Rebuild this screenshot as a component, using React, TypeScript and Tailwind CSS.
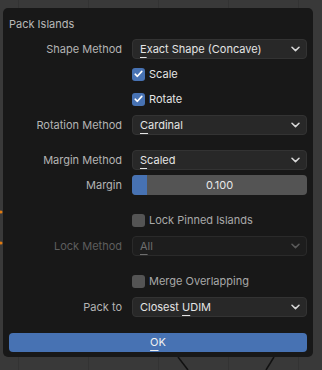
import React from 'react';

const Chevron = ({ color = '#d8d8d8' }: { color?: string }) => (
  <svg width="9" height="6" viewBox="0 0 9 6" className="shrink-0">
    <path d="M1 1.2 L4.5 4.6 L8 1.2" fill="none" stroke={color} strokeWidth="1.5" strokeLinecap="round" strokeLinejoin="round" />
  </svg>
);

const Key = ({ children }: { children: React.ReactNode }) => (
  <span className="underline decoration-1 underline-offset-[4px]">{children}</span>
);

const Label = ({ text, dim }: { text?: string; dim?: boolean }) => (
  <div className={`w-[114px] shrink-0 pr-[1px] text-right ${dim ? 'text-[#5e5e5e]' : 'text-[#b4b4b4]'}`}>
    {text}
  </div>
);

type DropProps = { label: string; before?: string; keyChar: string; after: string; dim?: boolean };

const Dropdown = ({ label, before = '', keyChar, after, dim }: DropProps) => (
  <div className="flex h-[20px] items-center gap-[9px]">
    <Label text={label} dim={dim} />
    <div
      className={`flex h-full flex-1 items-center justify-between rounded-[4px] border pl-[7px] pr-[6px] ${
        dim ? 'border-[#2a2a2a] bg-[#1d1d1d] text-[#6e6e6e]' : 'border-[#333333] bg-[#282828] text-[#e4e4e4]'
      }`}
    >
      <span>
        {before}
        <Key>{keyChar}</Key>
        {after}
      </span>
      <Chevron color={dim ? '#5a5a5a' : '#d8d8d8'} />
    </div>
  </div>
);

const Check = ({ label, checked }: { label: string; checked?: boolean }) => (
  <div className="flex h-[20px] items-center gap-[9px]">
    <Label />
    <div className="flex items-center gap-[4px]">
      <div
        className={`flex h-[13px] w-[13px] items-center justify-center rounded-[3px] ${
          checked ? 'bg-[#4772b3]' : 'bg-[#545454]'
        }`}
      >
        {checked && (
          <svg width="9" height="8" viewBox="0 0 9 8">
            <path d="M1.2 4.2 L3.4 6.3 L7.8 1.4" fill="none" stroke="#ffffff" strokeWidth="1.6" strokeLinecap="round" strokeLinejoin="round" />
          </svg>
        )}
      </div>
      <span className={checked ? 'text-[#e4e4e4]' : 'text-[#a8a8a8]'}>{label}</span>
    </div>
  </div>
);

export default function App() {
  return (
    <div
      className="relative h-[370px] w-[322px] overflow-hidden bg-[#393939] bg-[linear-gradient(to_right,#333333_1px,transparent_1px)] bg-[length:70px_100%] bg-[position:18px_0] pt-[8px] pl-[3px] text-[11px] leading-none"
      style={{ fontFamily: 'Inter, "DejaVu Sans", sans-serif' }}
    >
      <svg className="absolute left-0 top-0" width="322" height="370">
        <line x1="178" y1="357" x2="188" y2="370" stroke="#111111" strokeWidth="1.5" />
        <line x1="274" y1="357" x2="266" y2="370" stroke="#111111" strokeWidth="1.5" />
        <circle cx="1" cy="212" r="1.5" fill="#e07a10" />
        <circle cx="1" cy="243" r="1.5" fill="#e07a10" />
      </svg>
      <div className="relative h-[349px] w-[310px] rounded-[5px] bg-[#181818] px-[6px] pt-[6px]">
        <div className="flex h-[20px] items-center text-[#b8b8b8]">Pack Islands</div>
        <div className="mt-[5px] flex flex-col">
          <Dropdown label="Shape Method" keyChar="E" after="xact Shape (Concave)" />
          <div className="mt-[5px]">
            <Check label="Scale" checked />
          </div>
          <div className="mt-[5px]">
            <Check label="Rotate" checked />
          </div>
          <div className="mt-[6px]">
            <Dropdown label="Rotation Method" keyChar="C" after="ardinal" />
          </div>
          <div className="mt-[15px]">
            <Dropdown label="Margin Method" keyChar="S" after="caled" />
          </div>
          <div className="mt-[5px] flex h-[20px] items-center gap-[9px]">
            <Label text="Margin" />
            <div className="relative flex h-full flex-1 items-center justify-center overflow-hidden rounded-[4px] bg-[#545454]">
              <div className="absolute inset-y-0 left-0 w-[15px] bg-[#4772b3]" />
              <span className="relative text-[#e8e8e8]">0.100</span>
            </div>
          </div>
          <div className="mt-[15px]">
            <Check label="Lock Pinned Islands" />
          </div>
          <div className="mt-[6px]">
            <Dropdown label="Lock Method" keyChar="A" after="ll" dim />
          </div>
          <div className="mt-[15px]">
            <Check label="Merge Overlapping" />
          </div>
          <div className="mt-[6px]">
            <Dropdown label="Pack to" before="Closest " keyChar="U" after="DIM" />
          </div>
          <div className="mt-[16px] flex h-[19px] items-center justify-center rounded-[4px] bg-[#4772b3] text-[#f0f0f0]">
            <span>
              <Key>O</Key>K
            </span>
          </div>
        </div>
      </div>
    </div>
  );
}
